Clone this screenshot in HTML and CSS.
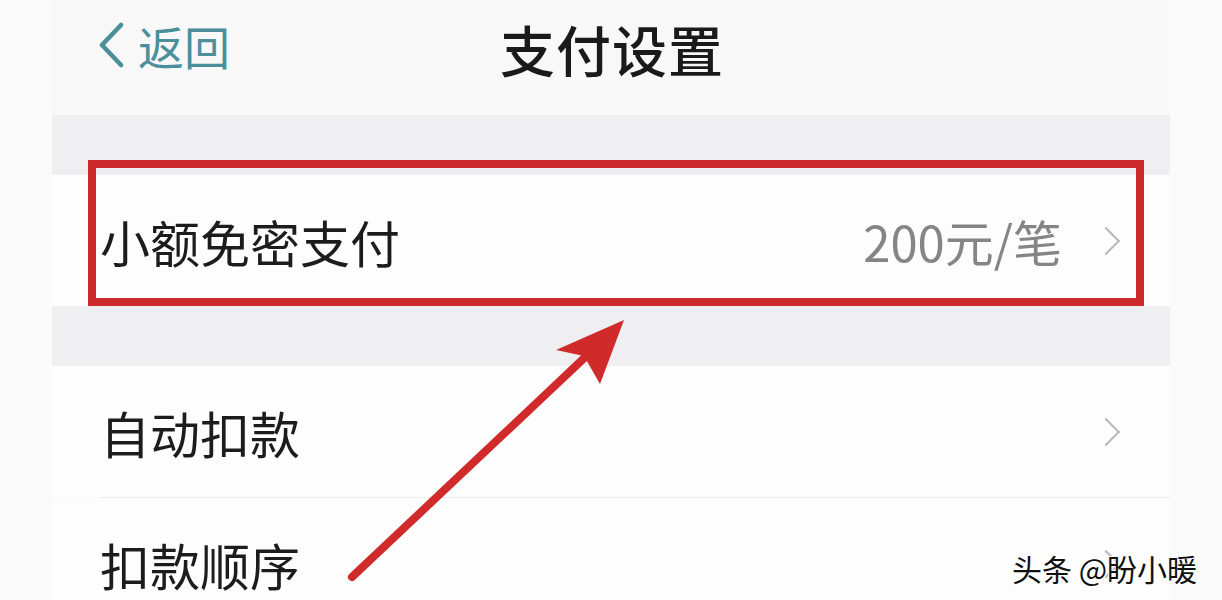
FILE: index.html
```html
<!DOCTYPE html>
<html>
<head>
    <meta charset="utf-8">
    <title>支付设置</title>
    <link rel="stylesheet" href="styles.css">
</head>
<body>
    <div class="screen">
        <div class="nav-bar">
            <a class="back" href="#">
                <svg class="back-icon" width="30" height="46" viewBox="0 0 30 46">
                    <path d="M25 3 L6 23 L25 43" fill="none" stroke="#4a8f9a" stroke-width="4.5" stroke-linecap="round" stroke-linejoin="round"/>
                </svg>
                返回
            </a>
            <h1 class="title">支付设置</h1>
        </div>

        <div class="gap"></div>
        <div class="cell cell-marked">
            <span class="cell-label">小额免密支付</span>
            <span class="cell-value">200元/笔</span>
            <span class="chevron"></span>
            <div class="mark-box"></div>
        </div>

        <div class="gap"></div>
        <div class="cell">
            <span class="cell-label">自动扣款</span>
            <span class="chevron"></span>
        </div>
        <div class="divider"></div>
        <div class="cell">
            <span class="cell-label">扣款顺序</span>
            <span class="chevron"></span>
        </div>
    </div>

    <!-- annotation arrow pointing up at the first cell -->
    <svg class="arrow" width="1222" height="600" viewBox="0 0 1222 600">
        <line x1="352" y1="577" x2="598" y2="345" stroke="#d02a2a" stroke-width="8" stroke-linecap="round"/>
        <polygon points="624,320 556,350 584,356 600,384" fill="#d02a2a"/>
    </svg>

    <div class="watermark">头条 @盼小暖</div>
</body>
</html>
```

FILE: styles.css
```css
*, *::before, *::after { padding: 0; margin: 0; box-sizing: border-box; }
html, body { width: 1222px; height: 600px; overflow: hidden; }
body { background: #fafafa; font-family: "Noto Sans CJK SC", "Noto Sans", sans-serif; position: relative; }

.screen { margin: 0 52px; width: 1118px; }

.nav-bar { height: 115px; background: #f8f8f8; position: relative; display: flex; align-items: center; justify-content: center; }
.back { position: absolute; left: 44px; top: 22px; display: flex; align-items: center; gap: 12px; color: #4a8f9a; font-size: 46px; text-decoration: none; line-height: 1; }
.title { font-size: 55px; font-weight: 500; color: #1a1a1a; letter-spacing: 1px; line-height: 1; margin-top: -18px; margin-left: 2px; }

.gap { height: 60px; background: #efeff1; }

.cell { height: 131px; background: #fdfdfd; display: flex; align-items: center; padding: 0 44px 0 48px; position: relative; }
.cell-label { font-size: 50px; color: #1c1c1c; line-height: 1; flex: 1; }
.cell-value { font-size: 49px; color: #858585; line-height: 1; margin-right: 34px; }
.chevron { width: 20px; height: 20px; border-top: 2.5px solid #b8b8b8; border-right: 2.5px solid #b8b8b8; transform: rotate(45deg); margin-right: 10px; }

.divider { height: 1px; background: #ececec; margin-left: 48px; }

.mark-box { position: absolute; left: 36px; top: -15px; width: 1056px; height: 146px; border: 8px solid #cc2a2a; }

.arrow { position: absolute; left: 0; top: 0; }

.watermark { position: absolute; left: 1012px; top: 553px; font-size: 30px; color: #111; line-height: 1; text-shadow: 1px 1px 0 #fff, -1px -1px 0 #fff; }
```
